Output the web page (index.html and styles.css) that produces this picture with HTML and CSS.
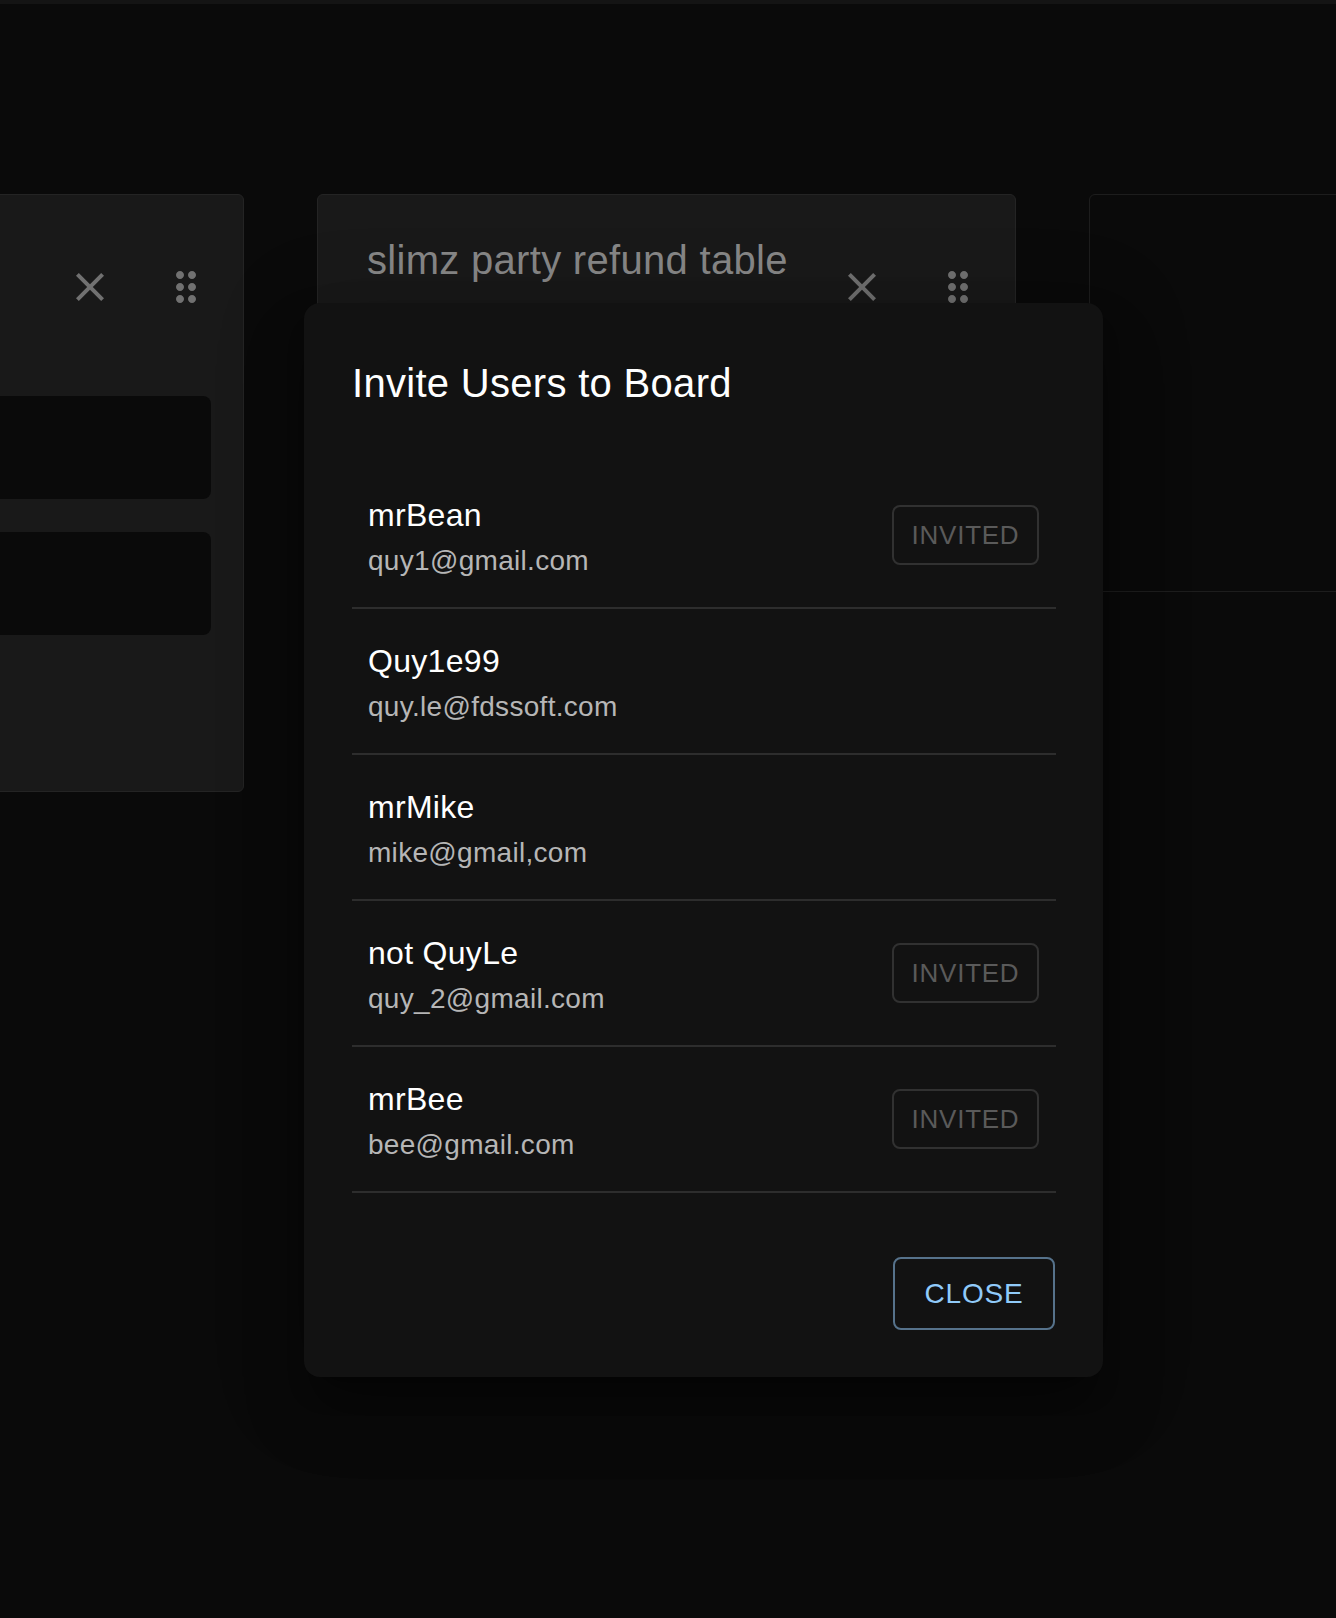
FILE: index.html
```html
<!DOCTYPE html>
<html lang="en">
<head>
<meta charset="utf-8">
<title>Invite Users to Board</title>
<link rel="stylesheet" href="styles.css">
</head>
<body>
<div class="topbar"></div>
<main class="board">
  <section class="card">
    <div class="card-head">
      <div class="card-title"></div>
      <div class="card-actions">
        <span class="icon-btn"><svg viewBox="0 0 24 24" width="48" height="48"><path d="M19 6.41L17.59 5 12 10.59 6.41 5 5 6.41 10.59 12 5 17.59 6.41 19 12 13.41 17.59 19 19 17.59 13.41 12z"/></svg></span>
        <span class="icon-btn"><svg viewBox="0 0 24 24" width="48" height="48"><path d="M11 18c0 1.1-.9 2-2 2s-2-.9-2-2 .9-2 2-2 2 .9 2 2zm-2-8c-1.1 0-2 .9-2 2s.9 2 2 2 2-.9 2-2-.9-2-2-2zm0-6c-1.1 0-2 .9-2 2s.9 2 2 2 2-.9 2-2-.9-2-2-2zm6 4c1.1 0 2-.9 2-2s-.9-2-2-2-2 .9-2 2 .9 2 2 2zm0 2c-1.1 0-2 .9-2 2s.9 2 2 2 2-.9 2-2-.9-2-2-2zm0 6c-1.1 0-2 .9-2 2s.9 2 2 2 2-.9 2-2-.9-2-2-2z"/></svg></span>
      </div>
    </div>
    <div class="card-body">
      <div class="task"></div>
      <div class="task"></div>
    </div>
  </section>
  <section class="card">
    <div class="card-head">
      <div class="card-title">slimz party refund table</div>
      <div class="card-actions">
        <span class="icon-btn"><svg viewBox="0 0 24 24" width="48" height="48"><path d="M19 6.41L17.59 5 12 10.59 6.41 5 5 6.41 10.59 12 5 17.59 6.41 19 12 13.41 17.59 19 19 17.59 13.41 12z"/></svg></span>
        <span class="icon-btn"><svg viewBox="0 0 24 24" width="48" height="48"><path d="M11 18c0 1.1-.9 2-2 2s-2-.9-2-2 .9-2 2-2 2 .9 2 2zm-2-8c-1.1 0-2 .9-2 2s.9 2 2 2 2-.9 2-2-.9-2-2-2zm0-6c-1.1 0-2 .9-2 2s.9 2 2 2 2-.9 2-2-.9-2-2-2zm6 4c1.1 0 2-.9 2-2s-.9-2-2-2-2 .9-2 2 .9 2 2 2zm0 2c-1.1 0-2 .9-2 2s.9 2 2 2 2-.9 2-2-.9-2-2-2zm0 6c-1.1 0-2 .9-2 2s.9 2 2 2 2-.9 2-2-.9-2-2-2z"/></svg></span>
      </div>
    </div>
  </section>
  <section class="card card-empty"></section>
</main>

<div class="dialog" role="dialog" aria-labelledby="dlg-title">
  <h2 class="dialog-title" id="dlg-title">Invite Users to Board</h2>
  <ul class="user-list">
    <li class="user">
      <div class="user-text"><div class="user-name">mrBean</div><div class="user-email">quy1@gmail.com</div></div>
      <span class="btn-invited">INVITED</span>
    </li>
    <li class="user">
      <div class="user-text"><div class="user-name">Quy1e99</div><div class="user-email">quy.le@fdssoft.com</div></div>
    </li>
    <li class="user">
      <div class="user-text"><div class="user-name">mrMike</div><div class="user-email">mike@gmail,com</div></div>
    </li>
    <li class="user">
      <div class="user-text"><div class="user-name">not QuyLe</div><div class="user-email">quy_2@gmail.com</div></div>
      <span class="btn-invited">INVITED</span>
    </li>
    <li class="user">
      <div class="user-text"><div class="user-name">mrBee</div><div class="user-email">bee@gmail.com</div></div>
      <span class="btn-invited">INVITED</span>
    </li>
  </ul>
  <div class="dialog-actions">
    <button class="btn-close" type="button">CLOSE</button>
  </div>
</div>
</body>
</html>
```
FILE: styles.css
```css
html, body {
  margin: 0;
  padding: 0;
}
body {
  background: #0a0a0a;
  font-family: "Liberation Sans", Arial, Helvetica, sans-serif;
  width: 1336px;
  height: 1618px;
  overflow: hidden;
  position: relative;
}
.topbar {
  height: 4px;
  background: #141414;
}
.board {
  display: flex;
  gap: 73px;
  margin-left: -455px;
  padding-top: 190px;
  align-items: flex-start;
}
.card {
  flex: 0 0 699px;
  box-sizing: border-box;
  height: 598px;
  background: #191919;
  border: 1px solid #242424;
  border-radius: 6px;
  padding: 0 17px 0 32px;
}
.card-empty {
  height: 398px;
  background: transparent;
  border-color: #1d1d1d;
}
.card-head {
  display: flex;
  align-items: flex-start;
}
.card-title {
  flex: 1;
  margin-top: 41px;
  padding-left: 17px;
  font-size: 40px;
  line-height: 48px;
  letter-spacing: 0.3px;
  color: #878787;
  white-space: nowrap;
}
.card-actions {
  display: flex;
  gap: 16px;
  margin-top: 52px;
}
.icon-btn {
  width: 80px;
  height: 80px;
  display: flex;
  align-items: center;
  justify-content: center;
  fill: #717171;
}
.card-body {
  margin-top: 69px;
  padding-right: 15px;
  display: flex;
  flex-direction: column;
  gap: 33px;
}
.task {
  height: 103px;
  background: #0a0a0a;
  border-radius: 8px;
}

.dialog {
  position: absolute;
  left: 304px;
  top: 303px;
  width: 799px;
  box-sizing: border-box;
  padding: 48px 47px 47px 48px;
  background: #121212;
  border-radius: 16px;
  box-shadow: 0 22px 30px -14px rgba(0,0,0,.3), 0 40px 60px 4px rgba(0,0,0,.2), 0 14px 80px 12px rgba(0,0,0,.18);
  color: #fff;
}
.dialog-title {
  margin: 0;
  font-size: 40px;
  line-height: 64px;
  font-weight: 400;
  letter-spacing: 0.3px;
}
.user-list {
  list-style: none;
  margin: 48px 0 0;
  padding: 0;
}
.user {
  display: flex;
  align-items: center;
  height: 146px;
  box-sizing: border-box;
  padding: 0 17px 0 16px;
  border-bottom: 2px solid #2d2d2d;
}
.user-text {
  flex: 1;
  padding-top: 1px;
}
.user-name {
  font-size: 32px;
  line-height: 48px;
  letter-spacing: 0.3px;
  color: #fff;
}
.user-email {
  margin-top: 2px;
  font-size: 28px;
  line-height: 40px;
  letter-spacing: 0.3px;
  color: #b6b6b6;
}
.btn-invited {
  box-sizing: border-box;
  width: 147px;
  height: 60px;
  display: flex;
  align-items: center;
  justify-content: center;
  border: 2px solid #313131;
  border-radius: 8px;
  font-size: 26px;
  letter-spacing: 0.75px;
  color: #5a5a5a;
}
.dialog-actions {
  display: flex;
  justify-content: flex-end;
  margin-top: 64px;
}
.btn-close {
  box-sizing: border-box;
  width: 162px;
  height: 73px;
  margin-right: 1px;
  background: transparent;
  border: 2px solid #56728b;
  border-radius: 8px;
  font-family: "Liberation Sans", Arial, Helvetica, sans-serif;
  font-size: 28px;
  letter-spacing: 0.8px;
  color: #90caf9;
  padding: 0;
}
```
